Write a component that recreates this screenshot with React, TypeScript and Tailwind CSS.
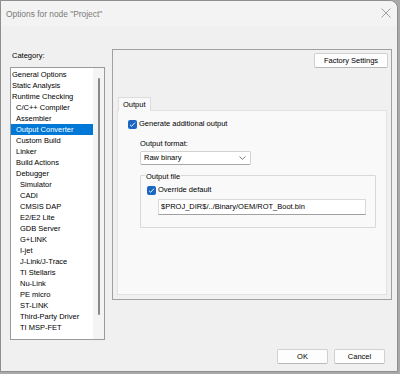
import React from "react";

const items: { t: string; l: number }[] = [
  { t: "General Options", l: 0 },
  { t: "Static Analysis", l: 0 },
  { t: "Runtime Checking", l: 0 },
  { t: "C/C++ Compiler", l: 1 },
  { t: "Assembler", l: 1 },
  { t: "Output Converter", l: 1 },
  { t: "Custom Build", l: 1 },
  { t: "Linker", l: 1 },
  { t: "Build Actions", l: 1 },
  { t: "Debugger", l: 1 },
  { t: "Simulator", l: 2 },
  { t: "CADI", l: 2 },
  { t: "CMSIS DAP", l: 2 },
  { t: "E2/E2 Lite", l: 2 },
  { t: "GDB Server", l: 2 },
  { t: "G+LINK", l: 2 },
  { t: "I-jet", l: 2 },
  { t: "J-Link/J-Trace", l: 2 },
  { t: "TI Stellaris", l: 2 },
  { t: "Nu-Link", l: 2 },
  { t: "PE micro", l: 2 },
  { t: "ST-LINK", l: 2 },
  { t: "Third-Party Driver", l: 2 },
  { t: "TI MSP-FET", l: 2 },
];

function Check() {
  return (
    <div className="w-[9px] h-[9px] rounded-[2px] bg-[#1a66c2] flex items-center justify-center shrink-0">
      <svg width="7" height="7" viewBox="0 0 7 7">
        <path d="M1 3.8 L2.7 5.3 L6 1.6" stroke="#fff" strokeWidth="0.9" fill="none" />
      </svg>
    </div>
  );
}

export default function App() {
  return (
    <div className="w-[400px] h-[374px] bg-[#a9a9a9] font-['Liberation_Sans',Arial,sans-serif] text-black text-[7.5px] leading-[10px]">
      <div className="w-[398px] h-[372px] bg-[#f0f0f0] border border-[#8e8e8e] rounded-tr-[8px] flex flex-col">
        {/* title bar */}
        <div className="h-[25px] flex items-center justify-between pl-[5px] pr-[6px] bg-[#f3f3f3] rounded-tr-[8px]">
          <span className="text-[8.4px] text-[#7a7a7a]">Options for node "Project"</span>
          <svg width="10" height="10" viewBox="0 0 10 10" className="mt-[-1px]">
            <path d="M0.5 0.5 L9.5 9.5 M9.5 0.5 L0.5 9.5" stroke="#8a8a8a" strokeWidth="0.8" />
          </svg>
        </div>
        {/* body */}
        <div className="flex pl-[9px] pt-[23px]">
          {/* left */}
          <div className="w-[95px] flex flex-col">
            <div className="h-[18px] pt-[2px] pl-[2px]">Category:</div>
            <div className="h-[273px] bg-white border border-[#9a9a9a] flex">
              <div className="w-[82px] pt-[0.5px]">
                {items.map((it, i) => (
                  <div
                    key={i}
                    className={
                      "h-[11px] leading-[11px] whitespace-nowrap " +
                      (i === 5 ? "bg-[#0078d7] text-white " : "") +
                      (it.l === 0 ? "pl-[1px]" : it.l === 1 ? "pl-[5px]" : "pl-[9px]")
                    }
                  >
                    {it.t}
                  </div>
                ))}
              </div>
              <div className="flex-1 bg-[#f4f4f4] flex justify-center pt-[10px]">
                <div className="w-[2px] h-[237px] bg-[#8a8a8a] rounded-full" />
              </div>
            </div>
          </div>
          {/* right panel */}
          <div className="ml-[7px] w-[280px] h-[251px] border border-[#a0a0a0] flex flex-col">
            <div className="flex justify-end pt-[3px] pr-[3px]">
              <div className="w-[74px] h-[15px] bg-[#fdfdfd] border border-[#d0d0d0] border-b-[#b8b8b8] rounded-[2px] flex items-center justify-center">
                Factory Settings
              </div>
            </div>
            <div className="mt-[29px] ml-[4px] mr-[4px] flex flex-col">
              <div className="flex">
                <div className="ml-[1px] w-[33px] h-[14px] bg-[#f9f9f9] border border-b-0 border-[#dcdcdc] flex items-center pl-[4px] mb-[-1px] relative">
                  Output
                </div>
              </div>
              <div className="h-[185px] bg-[#f9f9f9] border border-[#e2e2e2] flex flex-col pl-[10px] pt-[8px]">
                <div className="flex items-center gap-[2px] h-[10px]">
                  <Check />
                  <span>Generate additional output</span>
                </div>
                <div className="pl-[12px] mt-[10px]">Output format:</div>
                <div className="ml-[12px] mt-[2px] w-[111px] h-[14px] bg-white border border-[#d2d2d2] border-b-[#a8a8a8] rounded-[2px] flex items-center justify-between pl-[3px] pr-[4px]">
                  <span>Raw binary</span>
                  <svg width="7" height="4" viewBox="0 0 7 4">
                    <path d="M0.5 0.5 L3.5 3.3 L6.5 0.5" stroke="#555" strokeWidth="0.8" fill="none" />
                  </svg>
                </div>
                <div className="ml-[12px] mt-[10px] w-[236px] h-[53px] border border-[#d8d8d8] rounded-[1px] relative flex flex-col pl-[6px] pt-[9px]">
                  <span className="absolute left-[4px] top-[-4px] bg-[#f9f9f9] px-[1px]">Output file</span>
                  <div className="flex items-center gap-[2px] h-[10px]">
                    <Check />
                    <span>Override default</span>
                  </div>
                  <div className="mt-[4px] ml-[11px] w-[208px] h-[16px] bg-white border border-[#dadada] border-b-[#a0a0a0] flex items-center pl-[2px]">
                    $PROJ_DIR$/../Binary/OEM/ROT_Boot.bin
                  </div>
                </div>
              </div>
            </div>
          </div>
        </div>
        {/* buttons */}
        <div className="flex justify-end gap-[6px] pr-[12px] mt-[9px]">
          <div className="w-[51px] h-[15px] bg-[#fdfdfd] border border-[#d0d0d0] border-b-[#b8b8b8] rounded-[2px] flex items-center justify-center">
            OK
          </div>
          <div className="w-[51px] h-[15px] bg-[#fdfdfd] border border-[#d0d0d0] border-b-[#b8b8b8] rounded-[2px] flex items-center justify-center">
            Cancel
          </div>
        </div>
      </div>
    </div>
  );
}
